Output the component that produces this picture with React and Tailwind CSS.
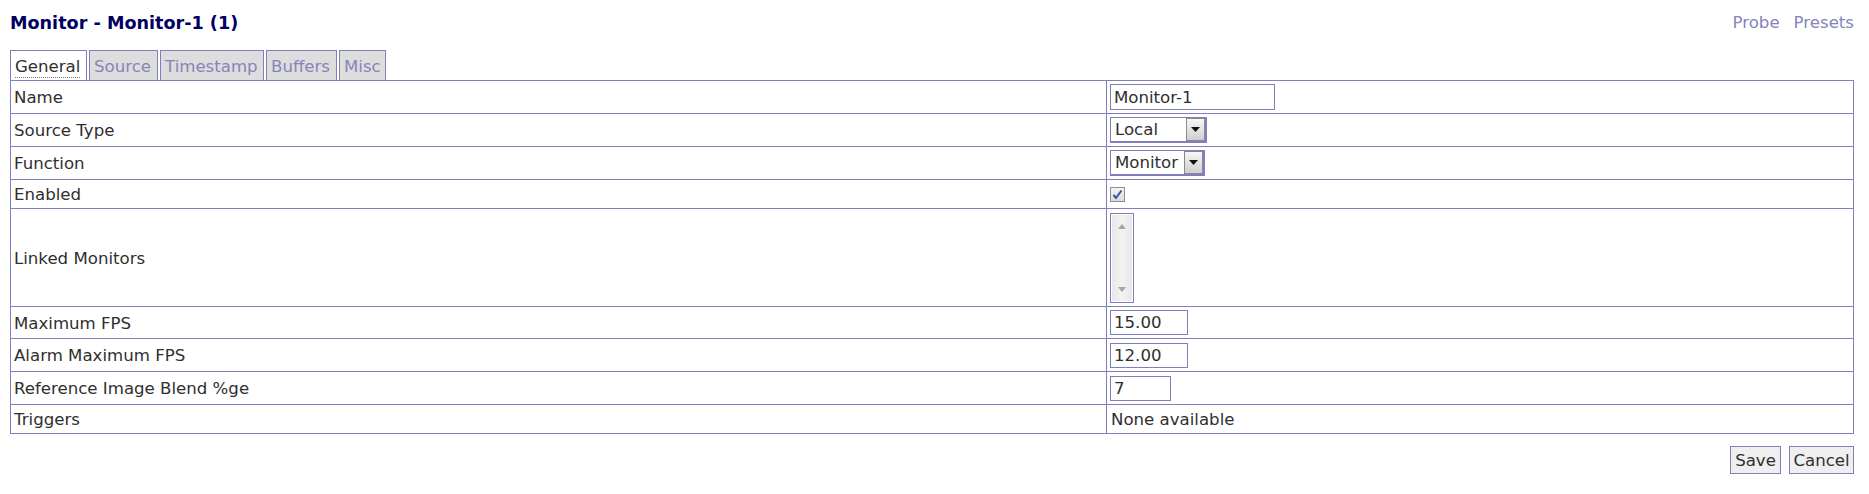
import React from 'react';

const border = 'border-[#7f7fbf]';

const tabs = [
  { name: 'General', w: 'w-[77px]', active: true },
  { name: 'Source', w: 'w-[69px]' },
  { name: 'Timestamp', w: 'w-[104px]' },
  { name: 'Buffers', w: 'w-[71px]' },
  { name: 'Misc', w: 'w-[47px]' },
];

function TextBox({ value, w }) {
  return (
    <div className={`${w} h-[25px] border ${border} bg-white flex items-center pl-[3px] pt-[2px] leading-none`}>
      {value}
    </div>
  );
}

function Select({ value, w }) {
  return (
    <div className={`${w} h-[26px] border ${border} border-r-2 border-b-2 bg-white flex items-center justify-between pl-[4px] leading-none`}>
      <span className="pt-[2px]">{value}</span>
      <span className="w-[19px] h-[23px] border border-[#8a8a8a] bg-gradient-to-b from-[#f7f7f7] to-[#cfcfcf] flex items-center justify-center">
        <svg width="9" height="5" viewBox="0 0 9 5"><path d="M0 0h9L4.5 5z" fill="#111" /></svg>
      </span>
    </div>
  );
}

function Checkbox() {
  return (
    <div className="w-[15px] h-[15px] border border-[#8c8c8c] bg-gradient-to-b from-[#f4f4f4] to-[#dcdcdc] flex items-center justify-center">
      <svg width="11" height="11" viewBox="0 0 11 11">
        <path d="M1.5 6 L4 9 L9.5 1.5" fill="none" stroke="#3553a6" strokeWidth="2" />
      </svg>
    </div>
  );
}

function ListBox() {
  return (
    <div className={`w-[24px] h-[90px] border ${border} bg-white p-[1px]`}>
      <div className="h-full w-full bg-gradient-to-r from-[#e8e8e8] via-[#f3f3f3] to-[#e6e6e6] flex flex-col items-center justify-between py-[9px]">
        <svg width="8" height="5" viewBox="0 0 8 5"><path d="M0 5h8L4 0z" fill="#a5a5a5" /></svg>
        <svg width="8" height="5" viewBox="0 0 8 5"><path d="M0 0h8L4 5z" fill="#a5a5a5" /></svg>
      </div>
    </div>
  );
}

function Row({ label, h, children }) {
  return (
    <div className={`flex ${h} border-b ${border}`}>
      <div className={`w-[1096px] border-r ${border} flex items-center pl-[3px] pt-[3px]`}>{label}</div>
      <div className="flex-1 flex items-center pl-[3px]">{children}</div>
    </div>
  );
}

export default function App() {
  return (
    <div className="w-[1869px] h-[494px] bg-white pl-[10px] text-[#2f2f2f] text-[16.6px] font-['DejaVu_Sans',Verdana,sans-serif]">
      <div className="w-[1844px] h-[44px] pt-[3px] flex items-center justify-between">
        <h1 className="text-[17.6px] font-bold text-[#000060]">Monitor - Monitor-1 (1)</h1>
        <div className="flex gap-[14px] text-[#8585bb]">
          <a>Probe</a>
          <a>Presets</a>
        </div>
      </div>

      <div className="mt-[6px] flex gap-[2px] h-[30px]">
        {tabs.map((t) => (
          <div
            key={t.name}
            className={`${t.w} border border-b-0 ${border} flex items-center pl-[4px] pt-[3px] ${
              t.active ? 'bg-white text-[#2f2f2f]' : 'bg-[#dddddd] text-[#8585bb]'
            }`}
          >
            <span className={t.active ? 'border-b border-dotted border-[#777] leading-[20px]' : ''}>{t.name}</span>
          </div>
        ))}
      </div>

      <div className={`w-[1844px] border border-b-0 ${border}`}>
        <Row label="Name" h="h-[33px]"><TextBox value="Monitor-1" w="w-[165px] h-[26px]" /></Row>
        <Row label="Source Type" h="h-[33px]"><Select value="Local" w="w-[97px]" /></Row>
        <Row label="Function" h="h-[33px]"><Select value="Monitor" w="w-[95px]" /></Row>
        <Row label="Enabled" h="h-[29px]"><Checkbox /></Row>
        <Row label="Linked Monitors" h="h-[98px]"><ListBox /></Row>
        <Row label="Maximum FPS" h="h-[32px]"><TextBox value="15.00" w="w-[78px]" /></Row>
        <Row label="Alarm Maximum FPS" h="h-[33px]"><TextBox value="12.00" w="w-[78px]" /></Row>
        <Row label="Reference Image Blend %ge" h="h-[33px]"><TextBox value="7" w="w-[61px]" /></Row>
        <Row label="Triggers" h="h-[29px]"><span className="pl-[1px] pt-[3px]">None available</span></Row>
      </div>

      <div className="w-[1844px] mt-[12px] flex justify-end gap-[8px]">
        <button className={`w-[51px] h-[28px] border ${border} bg-[#efefef] pt-[2px] text-[#2f2f2f]`}>Save</button>
        <button className={`w-[65px] h-[28px] border ${border} bg-[#efefef] pt-[2px] text-[#2f2f2f]`}>Cancel</button>
      </div>
    </div>
  );
}
